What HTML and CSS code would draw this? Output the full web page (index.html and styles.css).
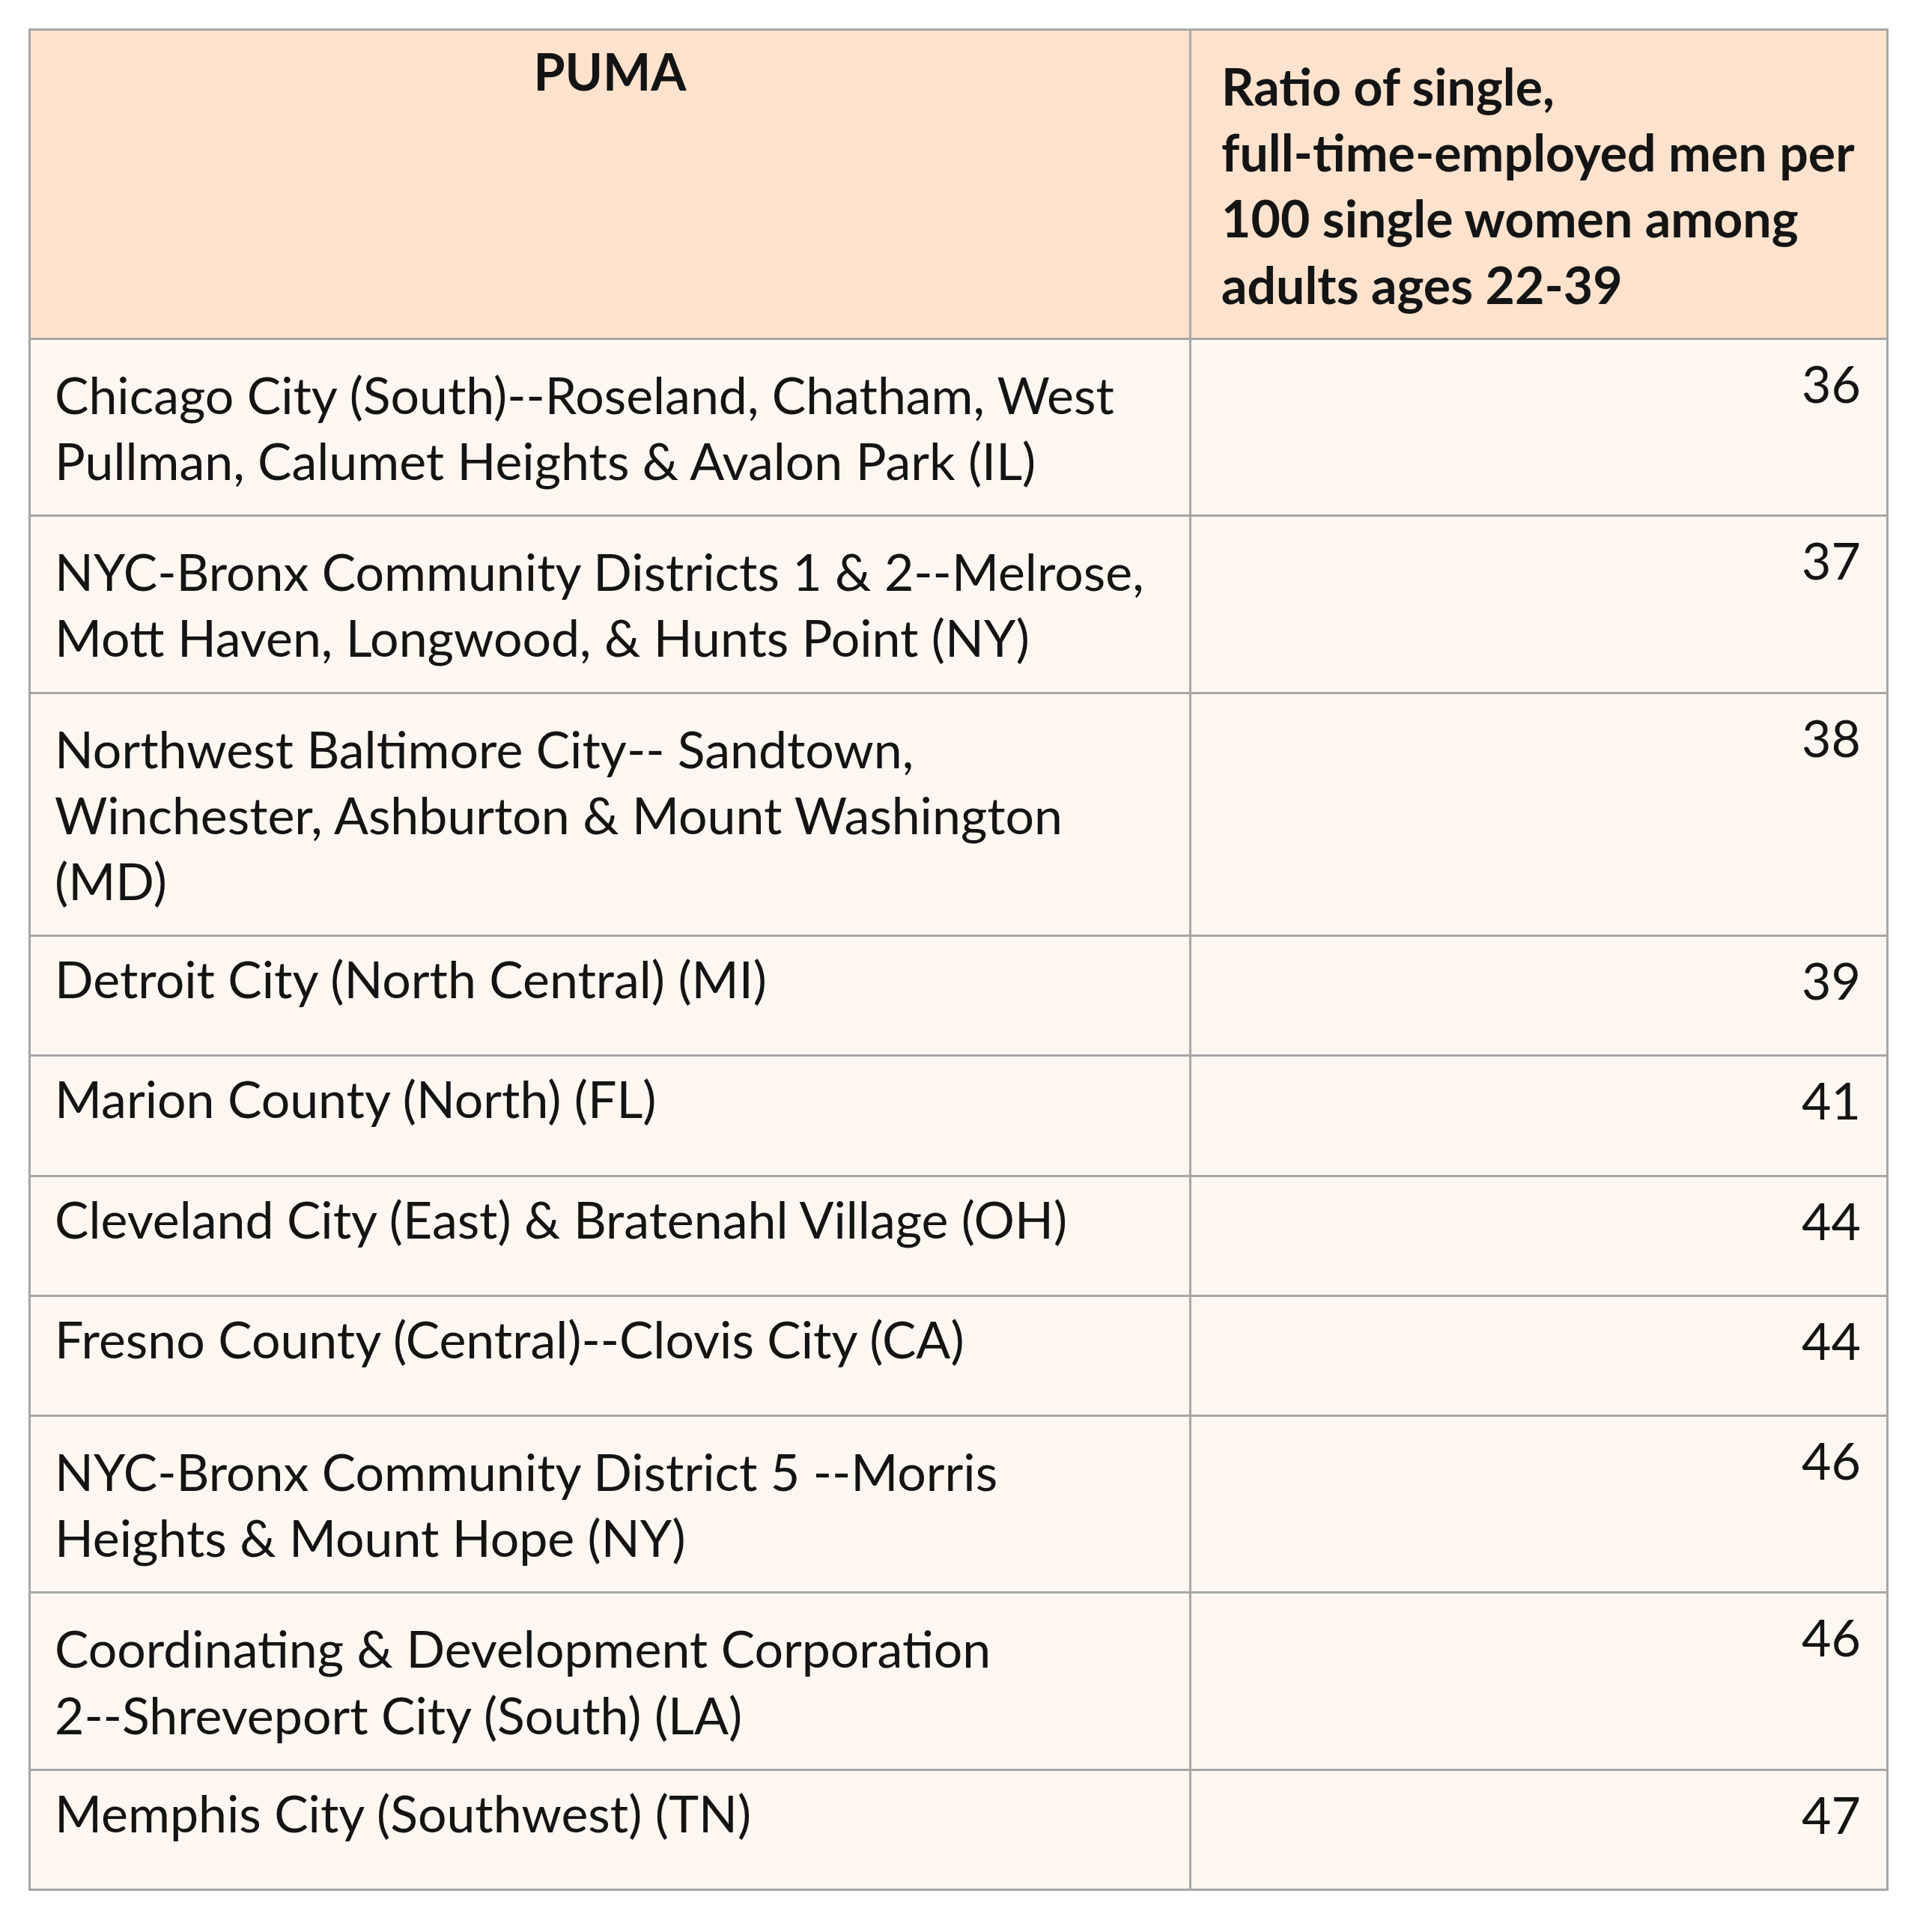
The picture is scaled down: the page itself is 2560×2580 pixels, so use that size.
FILE: index.html
```html
<!DOCTYPE html>
<html lang="en">
<head>
<meta charset="utf-8">
<title>PUMA ratio table</title>
<link rel="stylesheet" href="styles.css">
</head>
<body>
<table class="data-table">
  <colgroup>
    <col class="col-name">
    <col class="col-ratio">
  </colgroup>
  <thead>
    <tr>
      <th class="th-name">PUMA</th>
      <th class="th-ratio">Ratio of single,<br>full-time-employed men per<br>100 single women among<br>adults ages 22-39</th>
    </tr>
  </thead>
  <tbody>
    <tr>
      <td class="name">Chicago City (South)--Roseland, Chatham, West<br>Pullman, Calumet Heights &amp; Avalon Park (IL)</td>
      <td class="num">36</td>
    </tr>
    <tr>
      <td class="name">NYC-Bronx Community Districts 1 &amp; 2--Melrose,<br>Mott Haven, Longwood, &amp; Hunts Point (NY)</td>
      <td class="num">37</td>
    </tr>
    <tr>
      <td class="name">Northwest Baltimore City-- Sandtown,<br>Winchester, Ashburton &amp; Mount Washington<br>(MD)</td>
      <td class="num">38</td>
    </tr>
    <tr>
      <td class="name single">Detroit City (North Central) (MI)</td>
      <td class="num">39</td>
    </tr>
    <tr>
      <td class="name single">Marion County (North) (FL)</td>
      <td class="num">41</td>
    </tr>
    <tr>
      <td class="name single">Cleveland City (East) &amp; Bratenahl Village (OH)</td>
      <td class="num">44</td>
    </tr>
    <tr>
      <td class="name single">Fresno County (Central)--Clovis City (CA)</td>
      <td class="num">44</td>
    </tr>
    <tr>
      <td class="name">NYC-Bronx Community District 5 --Morris<br>Heights &amp; Mount Hope (NY)</td>
      <td class="num">46</td>
    </tr>
    <tr>
      <td class="name">Coordinating &amp; Development Corporation<br>2--Shreveport City (South) (LA)</td>
      <td class="num">46</td>
    </tr>
    <tr>
      <td class="name single">Memphis City (Southwest) (TN)</td>
      <td class="num">47</td>
    </tr>
  </tbody>
</table>
</body>
</html>
```
FILE: styles.css
```css
html, body {
  margin: 0;
  padding: 0;
  background: #ffffff;
}

body {
  padding: 38px 0 0 38px;
  font-family: Lato, "Noto Sans", sans-serif;
  color: #141414;
}

.data-table {
  border-collapse: collapse;
  table-layout: fixed;
  width: 2484px;
  font-size: 68px;
  line-height: 88.2px;
}

.data-table .col-name {
  width: 1550px;
}

.data-table th,
.data-table td {
  border: 3px solid #a6a6a6;
  vertical-align: top;
  padding: 29px 32px 28px 32px;
}

.data-table th {
  background: #fde2cd;
  font-weight: 700;
}

.data-table .th-name {
  text-align: center;
  padding-top: 10px;
}

.data-table .th-ratio {
  text-align: left;
  padding: 30px 30px 27px 40px;
}

.data-table td {
  background: #fdf6f1;
  font-weight: 400;
}

.data-table .name {
  text-align: left;
}

.data-table .name.single {
  padding-top: 12px;
  padding-bottom: 57px;
}

.data-table .num {
  text-align: right;
  padding: 14px 34px 0 20px;
}
```
